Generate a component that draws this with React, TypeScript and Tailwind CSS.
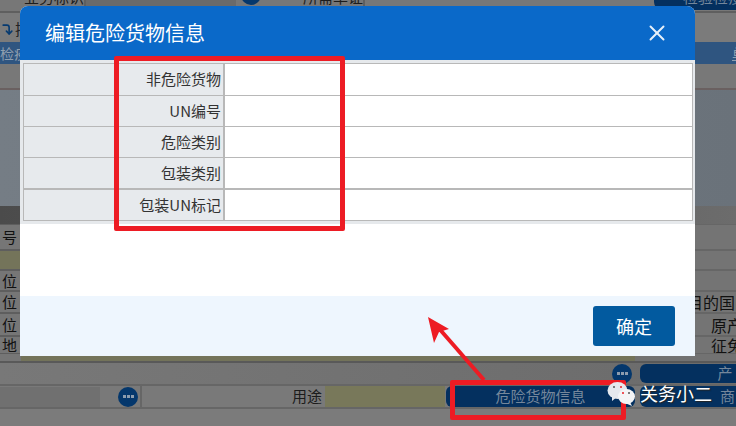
import { CornerRightDown, X } from "lucide-react";

const FONT = "font-['Noto_Sans_CJK_SC','Liberation_Sans',sans-serif]";

const dangerRows = [
  { label: "非危险货物", height: "h-[31px]" },
  { label: "UN编号", height: "h-[31px]" },
  { label: "危险类别", height: "h-[31px]" },
  { label: "包装类别", height: "h-[31px]" },
  { label: "包装UN标记", height: "h-[32px]", thick: true },
];

function DotsButton() {
  return (
    <span className="flex h-5 w-5 shrink-0 items-center justify-center gap-[1px] rounded-full bg-[#04376c]">
      <i className="h-[3px] w-[3px] bg-[#8c9cae]" />
      <i className="h-[3px] w-[3px] bg-[#8c9cae]" />
      <i className="h-[3px] w-[3px] bg-[#8c9cae]" />
    </span>
  );
}

// rows of the form behind the dimmed overlay
function BackRow({
  height,
  left,
  right,
  rightPad = "pl-[21px]",
  leftClass = "bg-[#767676]",
  rightClass = "bg-[#747474]",
}: {
  height: string;
  left?: string;
  right?: string;
  rightPad?: string;
  leftClass?: string;
  rightClass?: string;
}) {
  return (
    <div className={`flex ${height} justify-between overflow-hidden`}>
      <div
        className={`flex w-[20px] items-center justify-end overflow-hidden whitespace-nowrap border-y border-[#5e5e5e] pr-[3px] text-[15px] leading-[16px] text-[#111] ${leftClass}`}
      >
        {left}
      </div>
      <div
        className={`flex w-[46px] items-center overflow-hidden whitespace-nowrap border-y border-[#666] text-[16px] leading-[16px] text-[#111] ${rightPad} ${rightClass}`}
      >
        {right}
      </div>
    </div>
  );
}

function Background() {
  return (
    <div className="flex h-[426px] w-[736px] flex-col overflow-hidden bg-[#727272] text-[#1c1c1c]">
      <div className="flex h-[13px] items-start overflow-hidden border-b-2 border-[#5f5f5f] bg-[#777] text-[15px] leading-[11px]">
        <span className="h-[10px] w-[86px] shrink-0 overflow-hidden whitespace-nowrap border-r-2 border-[#5f5f5f] text-right">
          <b className="-mt-[9px] block font-normal">业务标识</b>
        </span>
        <span className="h-full w-[150px] shrink-0 bg-[#6a6a6a]" />
        <span className="flex h-[5px] w-[30px] shrink-0 items-end justify-center">
          <DotsButton />
        </span>
        <span className="h-[10px] w-[99px] shrink-0 overflow-hidden border-r-2 border-[#5f5f5f] text-right">
          <b className="-mt-[9px] block font-normal">所需单证</b>
        </span>
        <span className="ml-auto h-[10px] w-[82px] overflow-hidden whitespace-nowrap rounded-bl-lg bg-[#04305f] pl-[29px] text-[#75879b]">
          <b className="-mt-[9px] block font-normal">检验检疫</b>
        </span>
      </div>
      <div className="flex h-[29px] items-center justify-between bg-[#7b7b7b] pt-1 text-[15px] text-[#111]">
        <span className="flex items-center gap-[1px] overflow-hidden whitespace-nowrap pl-[1px]">
          <CornerRightDown className="h-[13px] w-[13px] shrink-0" strokeWidth={3} color="#063a70" />
          <span className="text-[#222]">插</span>
        </span>
      </div>
      <div className="flex h-[22px] items-center justify-between overflow-hidden bg-[#2f5580] text-[14px] text-[#8f9fb0]">
        <span className="w-[20px] overflow-hidden whitespace-nowrap">检疫</span>
        <span className="w-[39px] pl-[35px] underline">单</span>
      </div>
      <div className="h-[26px] border-b-2 border-[#6a6060] bg-[#787878]" />
      <div className="h-[116px] bg-gradient-to-r from-[#757d85] to-[#6a727a]" />
      <div className="h-[18px] bg-gradient-to-r from-[#4b4b4b] to-[#6c6c6c]" />
      <BackRow height="h-[26px]" left="号" />
      <BackRow height="h-[20px]" leftClass="bg-[#74745a]" />
      <BackRow height="h-[21px]" left="位" />
      <BackRow height="h-[22px]" left="位" right="目的国(" rightPad="pl-[0px] [text-indent:-3px]" />
      <BackRow height="h-[23px]" left="位" right="原产" />
      <BackRow height="h-[18px]" left="地" right="征免" />
      <div className="flex h-[7px]">
        <span className="h-full w-[21px] bg-[#767676]" />
        <span className="h-full w-[614px] bg-[#73735a]" />
      </div>
      <div className="flex h-[23px] items-center justify-end border-t-2 border-[#595959] bg-gradient-to-r from-[#787878] to-[#6b6b6b]">
        <DotsButton />
        <span className="ml-[8px] flex h-[19px] w-[96px] items-center justify-center rounded-l-md bg-[#04305f] pl-[74px] text-[15px] text-[#75879b]">
          产
        </span>
      </div>
      <div className="flex h-[25px] items-center border-y-2 border-[#666] bg-[#797979] text-[15px]">
        <span className="h-[20px] w-[100px] bg-[#707070]" />
        <span className="flex w-[40px] justify-center pl-[16px]">
          <DotsButton />
        </span>
        <span className="w-[185px] border-l-2 border-[#666] pr-[3px] text-right">用途</span>
        <span className="h-full w-[120px] bg-[#78785a]" />
        <span className="ml-[1px] flex h-[21px] w-[189px] items-center justify-center rounded-md bg-[#04305f] text-[#75879b]">
          危险货物信息
        </span>
        <span className="ml-[5px] flex h-[21px] w-[96px] items-center justify-end rounded-l-md bg-[#04305f] pr-[1px] text-[#75879b]">
          商
        </span>
      </div>
      <div className="flex-1 bg-[#7b7b7b]" />
    </div>
  );
}

function Modal() {
  return (
    <div className="absolute left-[20px] top-[6px] flex h-[350px] w-[675px] flex-col overflow-hidden rounded-t-lg bg-white">
      <div className="flex h-[54px] shrink-0 items-center justify-between bg-[#0a69c9] pl-[25px] pr-[25px] text-[20px] text-white">
        <span>编辑危险货物信息</span>
        <X className="h-[26px] w-[26px]" strokeWidth={1.8} color="#e6f0fa" />
      </div>
      <div className="bg-[#e6e9ec] pb-[3px] pl-[3px] pr-[2px] pt-[3px]">
        <div className="border border-[#b8b8b8] bg-white">
          {dangerRows.map((row, i) => (
            <div
              key={row.label}
              className={`flex ${row.height} ${i > 0 ? (row.thick ? "border-t-2" : "border-t") : ""} border-[#b8b8b8]`}
            >
              <div className="flex w-[201px] items-center justify-end border-r-2 border-[#b8b8b8] bg-[#e7eaed] pr-[2px] text-[15px] text-[#333]">
                {row.label}
              </div>
              <div className="flex-1" />
            </div>
          ))}
        </div>
      </div>
      <div className="flex-1" />
      <div className="flex h-[60px] shrink-0 items-center justify-end bg-[#eef6fe] pr-[20px]">
        <button
          type="button"
          className="flex h-[40px] w-[82px] items-center justify-center rounded-[3px] bg-[#025a9f] text-[18px] text-white"
        >
          确定
        </button>
      </div>
    </div>
  );
}

function Annotations() {
  return (
    <>
      <div className="absolute left-[114px] top-[56px] h-[175px] w-[231px] rounded-[2px] border-[5px] border-[#ed1c24]" />
      <div className="absolute left-[450px] top-[380px] h-[40px] w-[176px] rounded-[2px] border-[5px] border-[#ed1c24]" />
      <svg className="absolute left-[420px] top-[310px]" width="72" height="74" viewBox="0 0 72 74">
        <path d="M64 70 L16 15" stroke="#ed1c24" strokeWidth="4" fill="none" />
        <path d="M8 7 L29 19 L19 22 L14 33 Z" fill="#ed1c24" />
      </svg>
      <svg className="absolute left-[606px] top-[381px]" width="30" height="26" viewBox="0 0 30 26">
        <ellipse cx="11.5" cy="9.5" rx="10" ry="8.5" fill="#e6e9ee" />
        <path d="M6 15 L6 20 L11 16 Z" fill="#e6e9ee" />
        <ellipse cx="20.5" cy="15.5" rx="8.5" ry="7.5" fill="#f4f5f7" />
        <path d="M24 21 L26 25 L19 22 Z" fill="#f4f5f7" />
        <circle cx="8" cy="6" r="1" fill="#555" />
        <circle cx="15" cy="6" r="1" fill="#ed1c24" />
        <circle cx="17" cy="12" r="1" fill="#ed1c24" />
        <circle cx="23" cy="12" r="1" fill="#555" />
      </svg>
      <span className="absolute left-[640px] top-[380px] text-[18px] leading-[26px] text-white [text-shadow:1px_1px_1px_#222]">
        关务小二
      </span>
    </>
  );
}

export default function App() {
  return (
    <div className={`relative h-[426px] w-[736px] overflow-hidden ${FONT}`}>
      <Background />
      <Modal />
      <Annotations />
    </div>
  );
}
